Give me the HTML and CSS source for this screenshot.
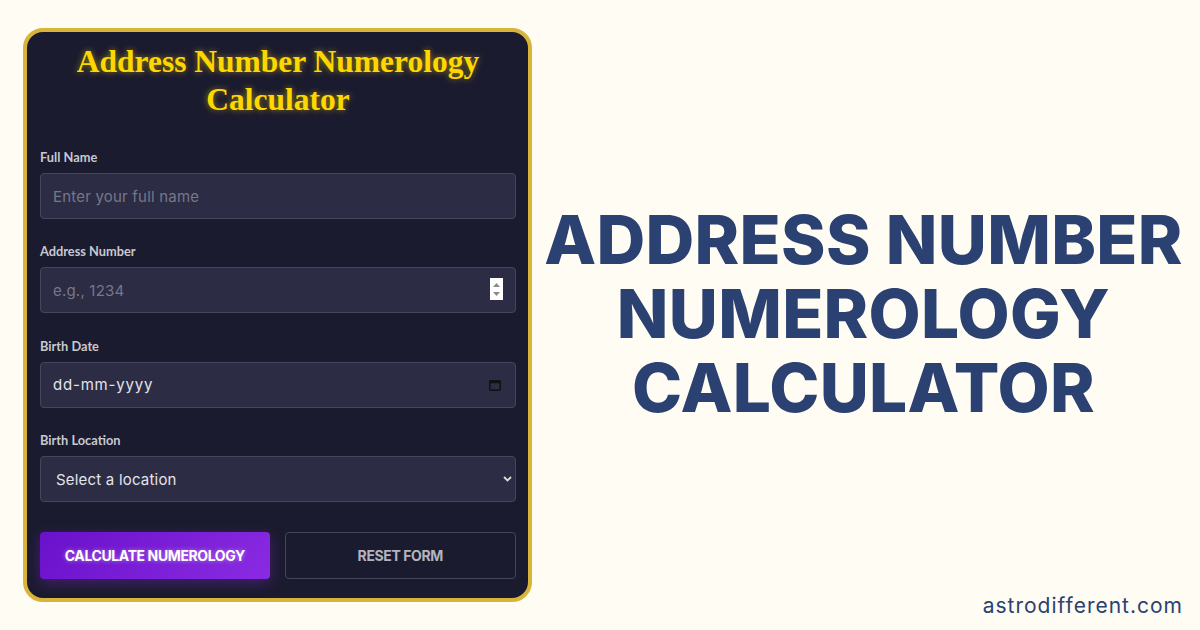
FILE: index.html
```html
<!DOCTYPE html>
<html lang="en">
<head>
<meta charset="utf-8">
<title>Address Number Numerology Calculator</title>
<link rel="stylesheet" href="styles.css">
</head>
<body>
<div class="page">
  <div class="card">
    <h1 class="card-title">Address Number Numerology Calculator</h1>
    <div class="group">
      <div class="label">Full Name</div>
      <div class="field"><span class="placeholder">Enter your full name</span></div>
    </div>
    <div class="group">
      <div class="label">Address Number</div>
      <div class="field"><span class="placeholder">e.g., 1234</span>
        <span class="spinner">
          <svg width="13" height="22" viewBox="0 0 13 22"><rect width="13" height="22" fill="#fff"/><path d="M3 9 L6.5 5 L10 9 Z" fill="#8a8a8a"/><path d="M3 14 L6.5 18 L10 14 Z" fill="#8a8a8a"/></svg>
        </span>
      </div>
    </div>
    <div class="group">
      <div class="label">Birth Date</div>
      <div class="field"><span class="value date">dd-mm-yyyy</span>
        <span class="cal">
          <svg width="12" height="11" viewBox="0 0 12 11"><rect x="0.75" y="0.75" width="10.5" height="9.5" rx="1" fill="none" stroke="#111" stroke-width="1.5"/><rect x="0.75" y="0.75" width="10.5" height="2.5" fill="#111"/></svg>
        </span>
      </div>
    </div>
    <div class="group">
      <div class="label">Birth Location</div>
      <div class="field select"><span class="value">Select a location</span>
        <span class="chev">
          <svg width="9" height="6" viewBox="0 0 9 6"><path d="M1 1 L4.5 4.5 L8 1" fill="none" stroke="#ddd" stroke-width="1.8"/></svg>
        </span>
      </div>
    </div>
    <div class="buttons">
      <div class="btn btn-primary">CALCULATE NUMEROLOGY</div>
      <div class="btn btn-reset">RESET FORM</div>
    </div>
  </div>
  <div class="side">
    <div class="side-title">ADDRESS NUMBER<br>NUMEROLOGY<br>CALCULATOR</div>
    <div class="site">astrodifferent.com</div>
  </div>
</div>
</body>
</html>
```
FILE: styles.css
```css
html, body {
  margin: 0;
  padding: 0;
  background: #fffcf4;
}
.page {
  width: 1200px;
  height: 630px;
  display: flex;
  box-sizing: border-box;
  padding: 28px 0 0 23px;
}
.card {
  width: 509px;
  height: 574px;
  box-sizing: border-box;
  border: 4px solid #d9b43a;
  border-radius: 20px;
  background: #1b1b2f;
  padding: 11px 12px 0 13px;
}
.card-title {
  margin: 0 0 30px;
  font-family: "Liberation Serif", "Times New Roman", serif;
  font-weight: bold;
  font-size: 31.5px;
  line-height: 38px;
  text-align: center;
  color: #ffd700;
  text-shadow: 0 0 6px rgba(255, 215, 0, 0.55);
  padding: 0 30px;
}
.group {
  margin-bottom: 24.4px;
}
.label {
  font-family: Lato, "Liberation Sans", sans-serif;
  font-weight: bold;
  font-size: 12.8px;
  line-height: 16px;
  color: #c8c8d0;
  margin-bottom: 8px;
}
.field {
  position: relative;
  height: 46px;
  box-sizing: border-box;
  background: #2c2c45;
  border: 1px solid #45455e;
  border-radius: 4px;
  display: flex;
  align-items: center;
  padding: 0 12px;
  font-family: Inter, "Open Sans", sans-serif;
  font-size: 15px;
  letter-spacing: 0.2px;
}
.placeholder {
  color: #77778a;
}
.value {
  color: #e4e4ea;
}
.date {
  letter-spacing: 0.8px;
}
.select {
  padding-left: 15px;
}
.spinner {
  position: absolute;
  right: 12px;
  top: 10px;
  line-height: 0;
}
.cal {
  position: absolute;
  right: 14px;
  top: 17px;
  line-height: 0;
}
.chev {
  position: absolute;
  right: 3px;
  top: 19px;
  line-height: 0;
}
.buttons {
  display: flex;
  gap: 15px;
  margin-top: 30px;
}
.btn {
  flex: 1;
  height: 47px;
  box-sizing: border-box;
  border-radius: 4px;
  display: flex;
  align-items: center;
  justify-content: center;
  font-family: Inter, "Open Sans", sans-serif;
  font-weight: 700;
  font-size: 14px;
  letter-spacing: -0.4px;
}
.btn-primary {
  background: linear-gradient(135deg, #6a11cb, #8a2be2);
  color: #fff;
  box-shadow: 0 4px 14px rgba(138, 43, 226, 0.35);
  text-shadow: 0 0 4px rgba(255, 255, 255, 0.45);
}
.btn-reset {
  border: 1px solid #45455e;
  color: #b4b4c0;
}
.side {
  flex: 1;
  display: flex;
  flex-direction: column;
  padding-right: 17px;
}
.side-title {
  flex: 1;
  display: flex;
  align-items: center;
  justify-content: center;
  text-align: center;
  font-family: Inter, "Open Sans", sans-serif;
  font-weight: 800;
  font-size: 67.5px;
  line-height: 74px;
  letter-spacing: 0.3px;
  color: #2a4172;
  padding-left: 12px;
  margin-top: 6px;
}
.site {
  text-align: right;
  font-family: Inter, "Open Sans", sans-serif;
  font-size: 21px;
  line-height: 24px;
  letter-spacing: 1px;
  color: #2a4172;
  padding-bottom: 12px;
}
```
